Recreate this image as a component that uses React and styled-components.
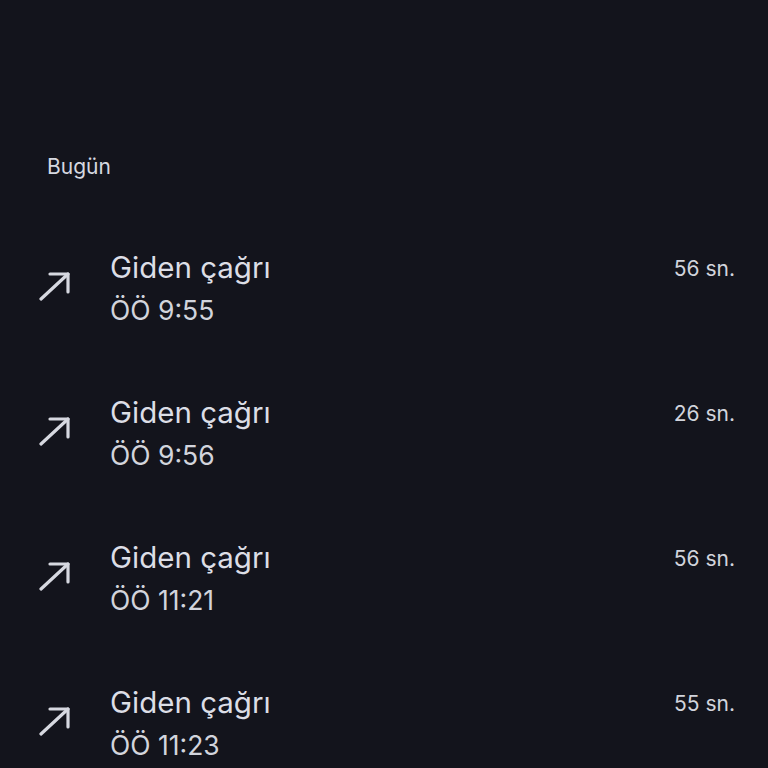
import React from 'react'
import styled, { createGlobalStyle } from 'styled-components'

const GlobalStyle = createGlobalStyle`
  html, body {
    margin: 0;
    padding: 0;
    background: #13141c;
  }
  body {
    font-family: Inter, Roboto, "Noto Sans", sans-serif;
    color: #dcdee6;
  }
`;

const Screen = styled.div`
  width: 768px;
  height: 768px;
  overflow: hidden;
  background: #13141c;
  padding-top: 153px;
  box-sizing: border-box;
`;

const SectionTitle = styled.div`
  font-size: 21px;
  line-height: 28px;
  padding-left: 47px;
  color: #d6d8e0;
  margin-bottom: 35px;
`;

const Row = styled.div`
  display: flex;
  align-items: center;
  height: 145px;
  padding: 0 33px 0 38px;
  box-sizing: border-box;
`;

const IconBox = styled.div`
  width: 72px;
  display: flex;
  align-items: center;
  margin-top: -6px;
`;

const Texts = styled.div`
  flex: 1;
  display: flex;
  flex-direction: column;
`;

const Title = styled.div`
  font-size: 29.5px;
  line-height: 40px;
  margin-bottom: 2px;
  color: #dcdee6;
`;

const Time = styled.div`
  font-size: 26.5px;
  line-height: 42px;
  color: #d2d4dc;
`;

const Duration = styled.div`
  align-self: flex-start;
  margin-top: 38px;
  font-size: 21px;
  line-height: 30px;
  color: #d2d4dc;
`;

const OutgoingArrow = () => (
  <svg width="34" height="30" viewBox="0 0 34 30" fill="none">
    <path d="M3 28 L30 3" stroke="#d6d8e0" strokeWidth="3.2" strokeLinecap="round" />
    <path d="M12 3 H30 V21" stroke="#d6d8e0" strokeWidth="3.2" strokeLinecap="round" strokeLinejoin="round" />
  </svg>
);

const calls = [
  { time: 'ÖÖ 9:55', duration: '56 sn.' },
  { time: 'ÖÖ 9:56', duration: '26 sn.' },
  { time: 'ÖÖ 11:21', duration: '56 sn.' },
  { time: 'ÖÖ 11:23', duration: '55 sn.' },
];

export default function App() {
  return (
    <>
      <GlobalStyle />
      <Screen>
        <SectionTitle>Bugün</SectionTitle>
        {calls.map((c, i) => (
          <Row key={i}>
            <IconBox><OutgoingArrow /></IconBox>
            <Texts>
              <Title>Giden çağrı</Title>
              <Time>{c.time}</Time>
            </Texts>
            <Duration>{c.duration}</Duration>
          </Row>
        ))}
      </Screen>
    </>
  )
}
